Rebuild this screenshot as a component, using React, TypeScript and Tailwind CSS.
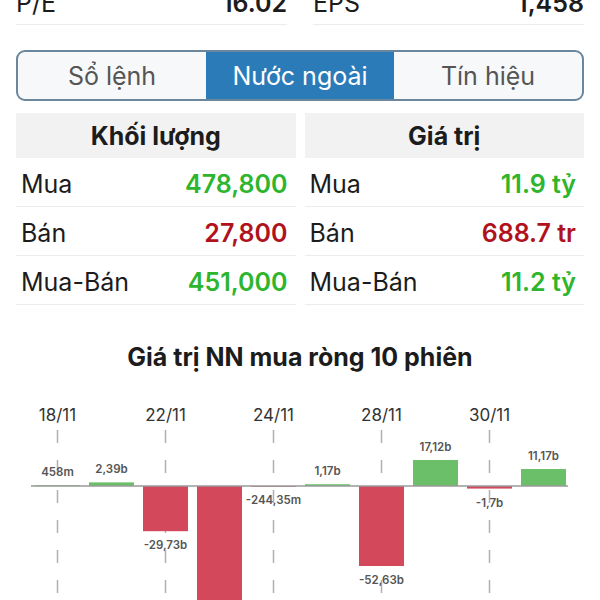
import React from "react";

const bars = [
  { v: 0.458, label: "458m" },
  { v: 2.39, label: "2,39b" },
  { v: -29.73, label: "-29,73b" },
  { v: -90, label: "-59,12b" },
  { v: -0.24435, label: "-244,35m" },
  { v: 1.17, label: "1,17b" },
  { v: -52.63, label: "-52,63b" },
  { v: 17.12, label: "17,12b" },
  { v: -1.7, label: "-1,7b" },
  { v: 11.17, label: "11,17b" },
];

const dates: { i: number; t: string }[] = [
  { i: 0, t: "18/11" },
  { i: 2, t: "22/11" },
  { i: 4, t: "24/11" },
  { i: 6, t: "28/11" },
  { i: 8, t: "30/11" },
];

function Chart() {
  const base = 96;
  const k = 1.52;
  return (
    <svg width={600} height={210} viewBox="0 0 600 210" className="block">
      {dates.map((d) => {
        const cx = 35 + 54 * d.i + 22.5;
        return (
          <g key={d.t}>
            <text x={cx} y={31} textAnchor="middle" fontSize={17} fill="#333" fontFamily="Inter, sans-serif">
              {d.t}
            </text>
            <line x1={cx} y1={40} x2={cx} y2={210} stroke="#b0b0b0" strokeWidth={1.5} strokeDasharray="13 17" />
          </g>
        );
      })}
      {bars.map((b, i) => {
        const x = 35 + 54 * i;
        const h = Math.abs(b.v) * k;
        const pos = b.v >= 0;
        const y = pos ? base - h : base;
        const ly = pos ? base - h - 9 : base + h + 18;
        return (
          <g key={i}>
            <rect x={x} y={y} width={45} height={Math.max(h, 0.8)} fill={pos ? "#6cbf69" : "#d3485b"} />
            <text
              x={x + 22.5}
              y={ly}
              textAnchor="middle"
              fontSize={11.5}
              fontWeight={600}
              fill="#555"
              fontFamily="Inter, sans-serif"
            >
              {b.label}
            </text>
          </g>
        );
      })}
      <line x1={31} y1={base} x2={568} y2={base} stroke="#9a9a9a" strokeWidth={1.5} />
    </svg>
  );
}

function Row({ label, value, color }: { label: string; value: string; color: string }) {
  return (
    <div className="flex h-[49px] items-center justify-between border-b border-[#ececec] pt-[6px] pl-[5px] pr-[8px]">
      <span className="text-[25px] text-[#1c1c1c]">{label}</span>
      <span className={`text-[25px] font-semibold ${color}`}>{value}</span>
    </div>
  );
}

export default function App() {
  return (
    <div className="w-[600px] h-[600px] overflow-hidden bg-white" style={{ fontFamily: "Inter, 'Noto Sans', sans-serif" }}>
      <div className="mt-[-17px] flex gap-[26px] px-[16px]">
        <div className="flex h-[42px] flex-1 items-center justify-between border-b border-[#ececec]">
          <span className="text-[25px] text-[#1c1c1c]">P/E</span>
          <span className="text-[25px] font-semibold text-[#1c1c1c]">16.02</span>
        </div>
        <div className="flex h-[42px] flex-1 items-center justify-between border-b border-[#ececec]">
          <span className="text-[25px] text-[#1c1c1c]">EPS</span>
          <span className="text-[25px] font-semibold text-[#1c1c1c]">1,458</span>
        </div>
      </div>

      <div className="mx-[16px] mt-[25px] flex h-[51px] overflow-hidden rounded-[9px] border-2 border-[#6a879e] bg-[#f7f8f9]">
        <div className="flex flex-1 items-center justify-center pt-[2px] text-[25px] text-[#555]">Sổ lệnh</div>
        <div className="flex flex-1 items-center justify-center bg-[#2b7bb9] pt-[2px] text-[25px] text-white">Nước ngoài</div>
        <div className="flex flex-1 items-center justify-center pt-[2px] text-[25px] text-[#555]">Tín hiệu</div>
      </div>

      <div className="mt-[12px] flex gap-[9px] px-[16px]">
        <div className="flex-1">
          <div className="flex h-[45px] items-center justify-center bg-[#f2f2f2] pt-[3px] text-[25px] font-bold text-[#1c1c1c]">
            Khối lượng
          </div>
          <Row label="Mua" value="478,800" color="text-[#2db52d]" />
          <Row label="Bán" value="27,800" color="text-[#b0121c]" />
          <Row label="Mua-Bán" value="451,000" color="text-[#2db52d]" />
        </div>
        <div className="flex-1">
          <div className="flex h-[45px] items-center justify-center bg-[#f2f2f2] pt-[3px] text-[25px] font-bold text-[#1c1c1c]">
            Giá trị
          </div>
          <Row label="Mua" value="11.9 tỷ" color="text-[#2db52d]" />
          <Row label="Bán" value="688.7 tr" color="text-[#b0121c]" />
          <Row label="Mua-Bán" value="11.2 tỷ" color="text-[#2db52d]" />
        </div>
      </div>

      <div className="mt-[36px] h-[32px] text-center text-[25px] leading-[32px] font-bold text-[#1c1c1c]">
        Giá trị NN mua ròng 10 phiên
      </div>

      <div className="mt-[17px]">
        <Chart />
      </div>
    </div>
  );
}
